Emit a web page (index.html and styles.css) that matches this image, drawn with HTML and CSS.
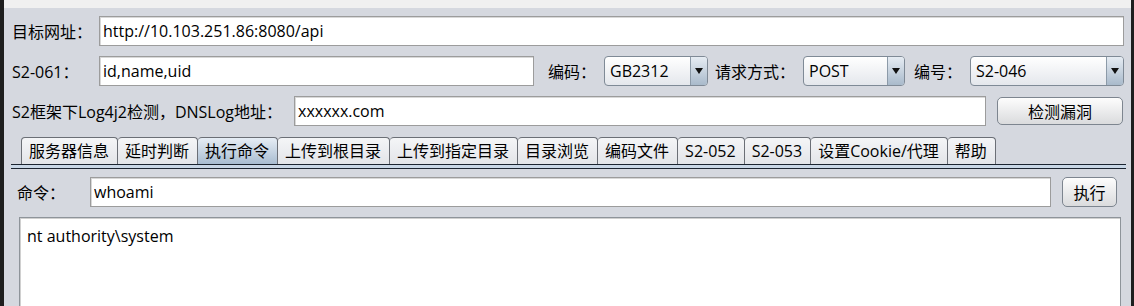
FILE: index.html
```html
<!DOCTYPE html>
<html lang="zh-CN">
<head>
  <meta charset="UTF-8">
  <meta name="viewport" content="width=device-width, initial-scale=1.0">
  <title>Struts2 检测工具</title>
  <link rel="stylesheet" href="styles.css">
</head>
<body>
  <div class="app">
    <div class="topbar"></div>
    <div class="form">
      <div class="row">
        <label class="label w-url">目标网址：</label>
        <input class="field grow" type="text" value="http://10.103.251.86:8080/api">
      </div>
      <div class="row">
        <label class="label w-url">S2-061：</label>
        <input class="field w-params" type="text" value="id,name,uid">
        <label class="label w-enc">编码：</label>
        <div class="combo w-gb"><span>GB2312</span><span class="arrow"></span></div>
        <label class="label w-method">请求方式：</label>
        <div class="combo w-post"><span>POST</span><span class="arrow"></span></div>
        <label class="label w-num">编号：</label>
        <div class="combo grow"><span>S2-046</span><span class="arrow"></span></div>
      </div>
      <div class="row">
        <label class="label w-dns">S2框架下Log4j2检测，DNSLog地址：</label>
        <input class="field w-dnsfield" type="text" value="xxxxxx.com">
        <button class="btn w-check">检测漏洞</button>
      </div>
    </div>

    <div class="tabs">
      <div class="tab-strip">
        <div class="tab">服务器信息</div>
        <div class="tab">延时判断</div>
        <div class="tab active">执行命令</div>
        <div class="tab">上传到根目录</div>
        <div class="tab">上传到指定目录</div>
        <div class="tab">目录浏览</div>
        <div class="tab">编码文件</div>
        <div class="tab">S2-052</div>
        <div class="tab">S2-053</div>
        <div class="tab">设置Cookie/代理</div>
        <div class="tab">帮助</div>
      </div>
      <div class="tab-line"></div>
      <div class="panel">
        <div class="row cmd-row">
          <label class="label w-cmd">命令：</label>
          <input class="field grow" type="text" value="whoami">
          <button class="btn w-run">执行</button>
        </div>
        <textarea class="output">nt authority\system</textarea>
      </div>
    </div>
  </div>
</body>
</html>
```

FILE: styles.css
```css
* {
  box-sizing: border-box;
}
html, body {
  margin: 0;
  height: 100%;
  overflow: hidden;
}
body {
  font-family: "Open Sans", "Noto Sans CJK SC", sans-serif;
  font-size: 16px;
  color: #000;
  background: #1e1e1e;
}
.app {
  height: 306px;
  margin-left: 4px;
  margin-right: 3px;
  background: #d5d8df;
}
.topbar {
  height: 8px;
  background: #f0f0f0;
}
.form {
  padding: 8px 7px 0 8px;
}
.row {
  display: flex;
  align-items: center;
  height: 30px;
  margin-bottom: 10px;
}
.label {
  flex: none;
  white-space: nowrap;
}
.grow {
  flex: 1;
  min-width: 0;
}
.field {
  height: 30px;
  padding: 0 3px;
  font: inherit;
  color: #000;
  background: #fff;
  border: 1px solid #9c9c9c;
  box-shadow: inset 1px 1px 0 #d8d8d8;
  outline: none;
}
.combo {
  display: flex;
  align-items: center;
  height: 30px;
  padding-left: 5px;
  border: 1px solid #7f8a96;
  border-radius: 4px;
  background: linear-gradient(#ffffff, #e4e7ec);
  overflow: hidden;
}
.combo span:first-child {
  flex: 1;
}
.arrow {
  position: relative;
  width: 17px;
  height: 100%;
  border-left: 1px solid #8c9aa8;
  background: linear-gradient(#e6ecf3, #a9bacb);
}
.arrow::after {
  content: "";
  position: absolute;
  left: 4px;
  top: 11px;
  border-left: 4px solid transparent;
  border-right: 4px solid transparent;
  border-top: 6px solid #111;
}
.btn {
  height: 28px;
  font: inherit;
  color: #000;
  border: 1px solid #7d858f;
  border-radius: 5px;
  background: linear-gradient(#fdfdfd, #dadbdd);
  padding: 0;
}

.w-url { width: 87px; }
.w-params { width: 435px; }
.w-enc { width: 70px; padding-left: 14px; }
.w-gb { width: 104px; }
.w-method { width: 95px; padding-left: 7px; }
.w-post { width: 102px; }
.w-num { width: 65px; padding-left: 9px; }
.w-dns { width: 282px; }
.w-dnsfield { width: 692px; }
.w-check { width: 126px; margin-left: 11px; }

.tabs {
  margin: 1px 5px 0 7px;
}
.tab-strip {
  display: flex;
  padding-left: 10px;
  height: 28px;
  align-items: flex-end;
}
.tab {
  height: 27px;
  padding: 0 8px 0 7px;
  line-height: 26px;
  white-space: nowrap;
  border: 1px solid #6b6f76;
  border-bottom: none;
  border-left-width: 0;
  border-radius: 4px 4px 0 0;
  background: linear-gradient(#f4f5f7, #e3e5e9);
}
.tab:first-child {
  border-left-width: 1px;
}
.tab.active {
  background: linear-gradient(#e6edf5, #a9bdd1);
}
.tab-line {
  height: 5px;
  border-top: 1px solid #1b2430;
  border-bottom: 1px solid #1b2430;
  background: #c9d7e6;
}
.panel {
  padding: 8px 9px 0 6px;
}
.cmd-row {
  margin-bottom: 10px;
}
.w-cmd { width: 73px; }
.w-run { width: 55px; height: 30px; margin-left: 11px; }
.output {
  display: block;
  width: calc(100% + 2px);
  margin-left: 2px;
  height: 100px;
  padding: 7px 7px;
  font: inherit;
  color: #000;
  resize: none;
  border: 1px solid #8e949a;
  border-bottom: none;
  box-shadow: inset 1px 1px 0 #d0d0d0;
  outline: none;
  overflow: hidden;
}
```
